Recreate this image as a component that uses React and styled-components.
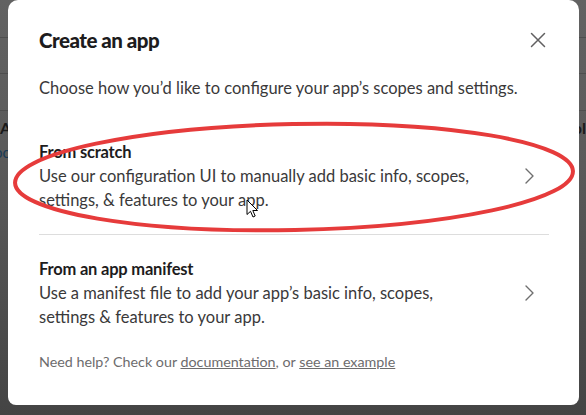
import React from "react";
import styled, { createGlobalStyle } from "styled-components";

const Global = createGlobalStyle`
  html, body { margin: 0; padding: 0; }
  body {
    width: 586px;
    height: 415px;
    overflow: hidden;
    font-family: Lato, "Noto Sans", "Liberation Sans", sans-serif;
    background: linear-gradient(#626262 0%, #5a5a5a 40%, #444444 100%);
  }
`;

const Page = styled.div`
  position: relative;
  width: 586px;
  height: 415px;
  overflow: hidden;
`;

const BackLines = styled.div`
  display: flex;
  flex-direction: column;
`;

const BackLine = styled.div`
  height: ${(p) => p.$h}px;
  border-bottom: 1px solid #4e4e4e;
`;

const BackText = styled.div`
  display: flex;
  justify-content: space-between;
  padding: 4px 0 0;
  font-weight: 700;
  font-size: 16px;
  color: #1a1a1a;
  line-height: 26px;
`;

const BackLink = styled.div`
  font-size: 15px;
  color: #1a3a55;
  line-height: 22px;
  margin-left: -6px;
`;

const Overlay = styled.div`
  position: absolute;
  inset: 0;
  display: flex;
  justify-content: flex-start;
  padding-left: 8px;
`;

const Modal = styled.div`
  position: relative;
  width: 571px;
  height: 405px;
  box-sizing: border-box;
  background: #ffffff;
  border-radius: 10px 10px 8px 8px;
  padding: 25px 30px 0 31px;
  display: flex;
  flex-direction: column;
  color: #1d1c1d;
`;

const Header = styled.div`
  display: flex;
  align-items: center;
  justify-content: space-between;
  height: 30px;
`;

const Title = styled.h1`
  margin: 0;
  font-size: 20.5px;
  font-weight: 900;
  letter-spacing: -0.5px;
  line-height: 30px;
  color: #1d1c1d;
`;

const CloseButton = styled.button`
  border: 0;
  background: none;
  padding: 0;
  margin-right: 3px;
  width: 16px;
  height: 16px;
  display: flex;
  align-items: center;
  justify-content: center;
  cursor: pointer;
`;

const Subtitle = styled.p`
  margin: 22px 0 0;
  font-size: 16.5px;
  line-height: 22px;
  color: #3a393a;
`;

const Options = styled.div`
  margin-top: 19px;
  display: flex;
  flex-direction: column;
`;

const Option = styled.div`
  display: flex;
  align-items: center;
  justify-content: space-between;
  padding: 22px 0;
  border-bottom: ${(p) => (p.$last ? "none" : "1px solid #dddddd")};
  cursor: pointer;
`;

const OptionText = styled.div`
  display: flex;
  flex-direction: column;
`;

const OptionTitle = styled.div`
  font-size: 16.5px;
  font-weight: 700;
  line-height: 24px;
  letter-spacing: -0.2px;
  color: #1d1c1d;
`;

const OptionDesc = styled.div`
  font-size: 16.5px;
  line-height: 24px;
  color: #3a393a;
  width: 445px;
`;

const Chevron = styled.span`
  display: flex;
  margin-right: 15px;
`;

const Footer = styled.div`
  font-size: 14.3px;
  line-height: 18px;
  color: #6d6c6d;
  margin-top: 2px;
`;

const FooterLink = styled.a`
  color: #6d6c6d;
  text-decoration: underline;
`;

const Annotation = styled.svg`
  position: absolute;
  left: 0;
  top: 0;
  pointer-events: none;
`;

const Cursor = styled.svg`
  position: absolute;
  left: 246px;
  top: 199px;
  pointer-events: none;
`;

const ChevronIcon = () => (
  <svg width="9" height="16" viewBox="0 0 9 16" fill="none">
    <path d="M1 1 L8 8 L1 15" stroke="#6f6f6f" strokeWidth="1.4" strokeLinecap="round" strokeLinejoin="round" />
  </svg>
);

export default function App() {
  return (
    <>
      <Global />
      <Page>
        <BackLines>
          <BackLine $h={37} />
          <BackLine $h={35} />
          <BackLine $h={36} />
          <BackText>
            <span>Ap</span>
            <span>ol</span>
          </BackText>
          <BackLink>oc</BackLink>
        </BackLines>
        <Overlay>
          <Modal>
            <Header>
              <Title>Create an app</Title>
              <CloseButton aria-label="Close">
                <svg width="16" height="16" viewBox="0 0 16 16" fill="none">
                  <path d="M1.5 1.5 L14.5 14.5 M14.5 1.5 L1.5 14.5" stroke="#616061" strokeWidth="1.5" strokeLinecap="round" />
                </svg>
              </CloseButton>
            </Header>
            <Subtitle>Choose how you’d like to configure your app’s scopes and settings.</Subtitle>
            <Options>
              <Option>
                <OptionText>
                  <OptionTitle>From scratch</OptionTitle>
                  <OptionDesc>
                    Use our configuration UI to manually add basic info, scopes, settings, &amp; features to your app.
                  </OptionDesc>
                </OptionText>
                <Chevron><ChevronIcon /></Chevron>
              </Option>
              <Option $last>
                <OptionText>
                  <OptionTitle>From an app manifest</OptionTitle>
                  <OptionDesc>
                    Use a manifest file to add your app’s basic info, scopes, settings &amp; features to your app.
                  </OptionDesc>
                </OptionText>
                <Chevron><ChevronIcon /></Chevron>
              </Option>
            </Options>
            <Footer>
              Need help? Check our <FooterLink href="#">documentation</FooterLink>, or{" "}
              <FooterLink href="#">see an example</FooterLink>
            </Footer>
          </Modal>
        </Overlay>
        <Annotation width="586" height="415" viewBox="0 0 586 415">
          <ellipse
            cx="294"
            cy="177"
            rx="279"
            ry="53"
            transform="rotate(-1.2 294 177)"
            fill="none"
            stroke="#e63b3b"
            strokeWidth="4"
          />
        </Annotation>
        <Cursor width="14" height="20" viewBox="0 0 14 20">
          <path
            d="M1 1 L1 15.5 L4.5 12.3 L7 18 L9.2 17 L6.8 11.5 L11.5 11.5 Z"
            fill="#ffffff"
            stroke="#000000"
            strokeWidth="1"
            strokeLinejoin="round"
          />
        </Cursor>
      </Page>
    </>
  );
}
